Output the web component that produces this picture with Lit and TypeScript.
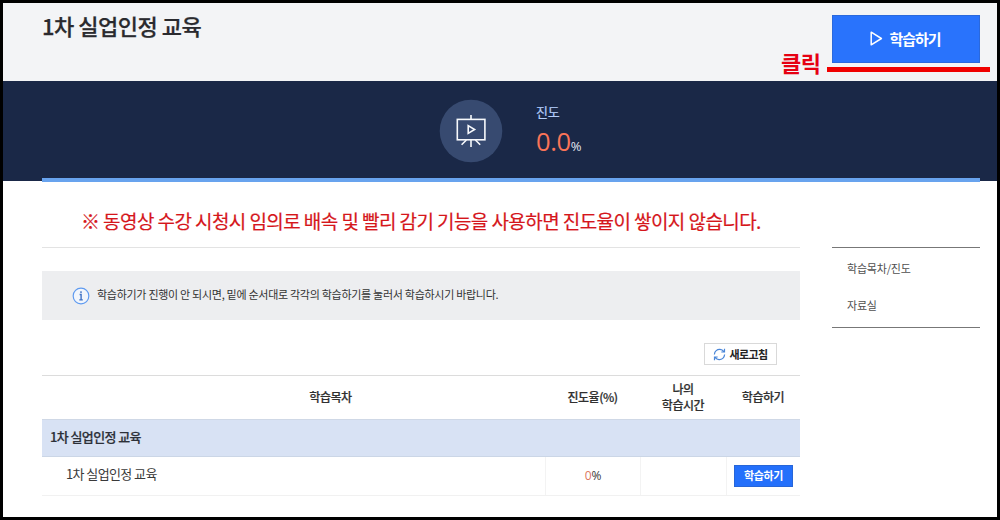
import { LitElement, html, css, svg } from "lit";
import { customElement, property } from "lit/decorators.js";

const playIcon = svg`<path d="M1.2 1.2 L11.4 7.5 L1.2 13.8 Z" fill="none" stroke="#fff" stroke-width="1.5" stroke-linejoin="round"/>`;

@customElement("course-header")
class CourseHeader extends LitElement {
  static styles = css`
    :host { display: flex; justify-content: space-between; height: 78px; background: #f3f4f6; padding: 0 17px 0 39px; box-sizing: border-box; }
    .title { margin: 7px 0 0; font-size: 22px; line-height: 30px; font-weight: 500; letter-spacing: -0.5px; color: #2a2a2e; -webkit-text-stroke: 0.25px #2a2a2e; }
    .action { position: relative; margin-top: 12px; width: 148px; height: 48px; }
    .study { display: flex; align-items: center; justify-content: center; gap: 7px; width: 148px; height: 48px; border: 1px solid #2a69dd; box-sizing: border-box; background: #2973fc; color: #fff; font: inherit; font-size: 15px; font-weight: 700; letter-spacing: -1.1px; padding: 0 2px 1px 0; }
    .study svg { width: 13px; height: 15px; }
    .click { position: absolute; left: -51px; top: 33px; font-size: 22px; line-height: 29px; font-weight: 700; letter-spacing: -0.4px; color: #e60012; white-space: nowrap; }
    .underline { position: absolute; left: -5px; top: 52px; width: 163px; height: 5px; background: #f00000; }
  `;
  @property() heading = "";
  render() {
    return html`
      <h1 class="title">${this.heading}</h1>
      <div class="action">
        <button class="study"><svg viewBox="0 0 13 15">${playIcon}</svg><span>학습하기</span></button>
        <span class="click">클릭</span>
        <span class="underline"></span>
      </div>`;
  }
}

@customElement("progress-banner")
class ProgressBanner extends LitElement {
  static styles = css`
    :host { display: block; height: 100px; background: #1a2847; padding: 0 17px 0 39px; box-sizing: border-box; }
    .inner { display: flex; height: 101px; box-sizing: border-box; border-bottom: 4px solid #68a3ee; padding-left: 397px; gap: 33px; }
    .badge { width: 64px; height: 64px; margin-top: 18px; flex: none; }
    .label { margin-top: 21px; font-size: 13px; line-height: 20px; letter-spacing: -0.3px; color: #b3cdfa; -webkit-text-stroke: 0.2px #b3cdfa; }
    .value { display: flex; align-items: baseline; font-family: "Open Sans", sans-serif; font-size: 25.5px; line-height: 36px; margin-top: 1px; letter-spacing: -0.4px; color: #f97458; }
    .unit { font-size: 13px; color: #e3e7ef; }
  `;
  render() {
    return html`
      <div class="inner">
        <svg class="badge" viewBox="0 0 64 64">
          <circle cx="32" cy="32" r="31.3" fill="#374a70"/>
          <g fill="none" stroke="#f7f9fc" stroke-width="1.6">
            <rect x="18.3" y="20.4" width="27.6" height="20.4"/>
            <path d="M32 16v4.400M32 41v7M27.400 41l-4.800 4.800M36.400 41l4.800 4.800"/>
            <path d="M29.200 26.600v7.800l6.400-3.900z"/>
          </g>
        </svg>
        <div>
          <div class="label">진도</div>
          <div class="value">0.0<span class="unit">%</span></div>
        </div>
      </div>`;
  }
}

@customElement("lesson-table")
class LessonTable extends LitElement {
  static styles = css`
    :host { display: block; border-top: 1px solid #dcdcdc; }
    .row { display: grid; grid-template-columns: 503px 95px 86px 74px; }
    .head { height: 43px; padding-bottom: 2px; box-sizing: border-box; align-items: center; text-align: center; font-size: 12px; line-height: 16px; font-weight: 500; letter-spacing: -0.45px; color: #303030; -webkit-text-stroke: 0.2px #303030; }
    .head .first { padding-left: 74px; }
    .group { height: 38px; box-sizing: border-box; border-top: 1px solid #cfd8e6; border-bottom: 1px solid #cbd6e6; background: #d8e2f4; padding-left: 8px; font-size: 13px; line-height: 34px; font-weight: 500; letter-spacing: -0.6px; color: #2c3038; -webkit-text-stroke: 0.2px #2c3038; }
    .body { height: 39px; box-sizing: border-box; border-bottom: 1px solid #f1f1f1; font-size: 13px; line-height: 34px; letter-spacing: -0.6px; color: #3a3a3a; }
    .body > div + div { border-left: 1px solid #f3f3f3; }
    .name { padding-left: 24px; }
    .rate { text-align: center; font-family: "Open Sans", sans-serif; font-size: 12px; line-height: 37px; letter-spacing: -0.2px; }
    .num { color: #dc7660; }
    .go { display: block; margin: 8px 0 0 7px; width: 59px; height: 22px; border: 1px solid #2766d8; background: #2470fb; color: #fff; font: inherit; font-size: 11px; line-height: 17px; font-weight: 700; letter-spacing: -0.4px; padding: 0 0 2px; }
  `;
  @property() group = "";
  render() {
    return html`
      <div class="row head"><div class="first">학습목차</div><div>진도율(%)</div><div>나의<br>학습시간</div><div>학습하기</div></div>
      <div class="group">${this.group}</div>
      <div class="row body">
        <div class="name">${this.group}</div>
        <div class="rate"><span class="num">0</span>%</div>
        <div></div>
        <div><button class="go">학습하기</button></div>
      </div>`;
  }
}

@customElement("app-root")
class AppRoot extends LitElement {
  static styles = css`
    :host { display: block; width: 1000px; height: 520px; box-sizing: border-box; border: 3px solid #000; background: #fff; overflow: hidden; font-family: "Noto Sans CJK KR", "Noto Sans", sans-serif; }
    .content { display: flex; justify-content: space-between; padding: 1px 17px 0 39px; }
    .main { width: 758px; }
    .warning { height: 66px; box-sizing: border-box; border-bottom: 1px solid #e3e3e3; margin: 0; padding: 23px 0 0 39px; font-size: 19px; line-height: 32px; font-weight: 400; letter-spacing: -0.57px; color: #d5161b; white-space: nowrap; -webkit-text-stroke: 0.2px #d5161b; }
    .info { display: flex; align-items: center; gap: 7px; height: 49px; box-sizing: border-box; margin-top: 23px; padding-left: 30px; background: #edeef0; font-size: 11px; letter-spacing: -0.28px; color: #333; white-space: nowrap; }
    .info span { padding-bottom: 3px; }
    .info svg { width: 18px; height: 18px; }
    .tools { display: flex; justify-content: flex-end; padding: 23px 23px 0 0; height: 55px; box-sizing: border-box; }
    .refresh { display: flex; align-items: center; justify-content: center; gap: 3px; width: 73px; height: 22px; box-sizing: border-box; border: 1px solid #d9d9d9; background: #fff; color: #222; font: inherit; font-size: 11px; line-height: 18px; font-weight: 700; letter-spacing: -0.6px; padding: 0; white-space: nowrap; }
    .refresh span { padding-bottom: 1px; }
    .refresh svg { width: 13px; height: 13px; }
    .side { width: 148px; height: 81px; box-sizing: border-box; margin-top: 65px; border-top: 1px solid #777; border-bottom: 1px solid #777; padding: 2px 0 0 15px; font-size: 11px; line-height: 37px; letter-spacing: -0.2px; color: #505050; }
  `;
  render() {
    return html`
      <course-header heading="1차 실업인정 교육"></course-header>
      <progress-banner></progress-banner>
      <div class="content">
        <div class="main">
          <p class="warning">※ 동영상 수강 시청시 임의로 배속 및 빨리 감기 기능을 사용하면 진도율이 쌓이지 않습니다.</p>
          <div class="info">
            <svg viewBox="0 0 17 17"><circle cx="8.5" cy="8.5" r="7.4" fill="#f2f6fc" stroke="#5e9af0" stroke-width="1.1"/><path d="M8.5 4v1.7M7.2 7.1h1.4v5M6.9 12.2h3.3" fill="none" stroke="#3f72c4" stroke-width="1.3"/></svg>
            <span>학습하기가 진행이 안 되시면, 밑에 순서대로 각각의 학습하기를 눌러서 학습하시기 바랍니다.</span>
          </div>
          <div class="tools">
            <button class="refresh">
              <svg viewBox="0 0 13 13" fill="none" stroke="#4a86d8" stroke-width="1.2"><path d="M1.4 6.4C1.5 3.2 4.2 1.2 7 1.4c1.7.1 3 1 3.9 2.2M11.5.8v3.2H8.3M11.6 6.6c-.1 3.2-2.8 5.2-5.6 5-1.7-.1-3-1-3.9-2.2M1.5 12.2V9h3.2"/></svg>
              <span>새로고침</span>
            </button>
          </div>
          <lesson-table group="1차 실업인정 교육"></lesson-table>
        </div>
        <nav class="side"><div>학습목차/진도</div><div>자료실</div></nav>
      </div>`;
  }
}
